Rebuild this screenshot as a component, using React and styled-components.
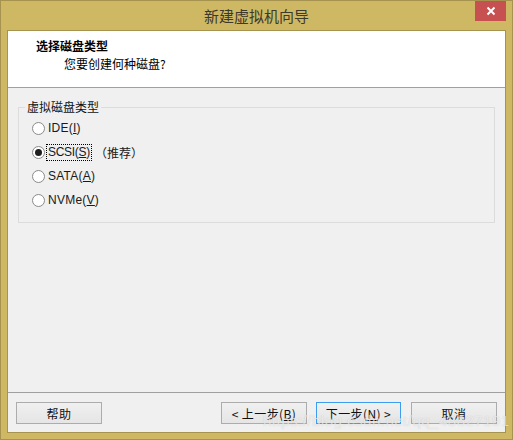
import styled, { createGlobalStyle } from 'styled-components';

const Global = createGlobalStyle`
  html, body { margin: 0; padding: 0; background: #cfb863; }
  body { font-family: "Liberation Sans", "Noto Sans CJK SC", sans-serif; }
`;

const Win = styled.div`
  position: relative;
  width: 513px;
  height: 440px;
  box-sizing: border-box;
  border: 1px solid #a5934f;
  background: #cfb863;
  display: flex;
  flex-direction: column;
  overflow: hidden;
`;

const TitleBar = styled.div`
  height: 29px;
  flex: none;
  display: flex;
  justify-content: center;
  align-items: center;
  padding-bottom: 1px;
  box-sizing: border-box;
  font-family: "Noto Sans CJK SC", sans-serif;
  font-size: 15px;
  color: #3d3a2c;
`;

const CloseBtn = styled.div`
  position: absolute;
  top: 0;
  right: 6px;
  width: 31px;
  height: 20px;
  background: #c75050;
  display: flex;
  align-items: center;
  justify-content: center;
`;

const Client = styled.div`
  flex: 1;
  margin: 0 6px 6px 6px;
  border: 1px solid #a5934f;
  background: #f0f0f0;
  display: flex;
  flex-direction: column;
  font-family: "Noto Sans CJK SC", sans-serif;
  font-size: 12px;
  color: #000;
`;

const Header = styled.div`
  height: 57px;
  flex: none;
  box-sizing: border-box;
  background: #fff;
  border-bottom: 1px solid #a0a0a0;
  padding: 6px 0 0 28px;
  line-height: 18px;
`;

const HeadTitle = styled.div`
  font-weight: 700;
`;

const HeadSub = styled.div`
  margin-left: 28px;
`;

const Body = styled.div`
  flex: 1;
  padding: 12px 10px 0 10px;
`;

const Group = styled.fieldset`
  margin: 0;
  padding: 2px 0 0 13px;
  height: 123px;
  box-sizing: border-box;
  border: 1px solid #dcdcdc;
  display: flex;
  flex-direction: column;
  min-inline-size: 0;
`;

const Legend = styled.legend`
  padding: 0 2px;
  margin-left: -7px;
  line-height: 14px;
  color: #111;
`;

const Option = styled.div`
  height: 24px;
  display: flex;
  align-items: center;
  gap: 1px;
`;

const Radio = styled.span`
  width: 11px;
  height: 11px;
  flex: none;
  border: 1px solid #8a8a8a;
  border-radius: 50%;
  background: #fff;
  display: flex;
  align-items: center;
  justify-content: center;
  &::after {
    content: "";
    display: ${(p) => (p.$on ? 'block' : 'none')};
    width: 7px;
    height: 7px;
    border-radius: 50%;
    background: #1e1e1e;
  }
`;

const Label = styled.span`
  padding: 0 1px;
  line-height: 15px;
  border: 1px ${(p) => (p.$focus ? 'dotted #000' : 'solid transparent')};
  color: #1a1a1a;
  font-family: "Liberation Sans", "Noto Sans CJK SC", sans-serif;
  letter-spacing: ${(p) => (p.$focus ? '-0.3px' : '0.25px')};
`;

const Note = styled.span`
  margin-left: 2px;
  color: #1a1a1a;
`;

const Footer = styled.div`
  height: 40px;
  flex: none;
  border-top: 1px solid #a0a0a0;
  box-sizing: border-box;
  padding: 9px 8px 0 8px;
  display: flex;
  gap: 9px;
`;

const Btn = styled.div`
  width: ${(p) => (p.$primary ? '85px' : '86px')};
  height: 22px;
  box-sizing: border-box;
  border: 1px solid ${(p) => (p.$primary ? '#3c9cf0' : '#acacac')};
  background: linear-gradient(#f0f0f0, #e5e5e5);
  display: flex;
  align-items: center;
  justify-content: center;
  white-space: pre;
  font-size: 12px;
  letter-spacing: 0.4px;
  color: #111;
  margin-left: ${(p) => (p.$push ? 'auto' : '0')};
  margin-right: ${(p) => (p.$primary ? '1px' : '0')};
`;

const Watermark = styled.div`
  position: absolute;
  left: 262px;
  top: 411px;
  font-family: "Liberation Sans", sans-serif;
  font-size: 15px;
  letter-spacing: 0.5px;
  white-space: nowrap;
  color: rgba(255, 255, 255, 0.62);
  text-shadow: 0 0 1px rgba(120, 120, 120, 0.35);
  pointer-events: none;
`;

export default function App() {
  return (
    <Win>
      <Global />
      <TitleBar>新建虚拟机向导</TitleBar>
      <CloseBtn>
        <svg width="10" height="10" viewBox="0 0 10 10">
          <path d="M1.5 1.5 L8.5 8.5 M8.5 1.5 L1.5 8.5" stroke="#fff" strokeWidth="2" />
        </svg>
      </CloseBtn>
      <Client>
        <Header>
          <HeadTitle>选择磁盘类型</HeadTitle>
          <HeadSub>您要创建何种磁盘?</HeadSub>
        </Header>
        <Body>
          <Group>
            <Legend>虚拟磁盘类型</Legend>
            <Option>
              <Radio />
              <Label>IDE(<u>I</u>)</Label>
            </Option>
            <Option>
              <Radio $on />
              <Label $focus>SCSI(<u>S</u>)</Label>
              <Note>（推荐）</Note>
            </Option>
            <Option>
              <Radio />
              <Label>SATA(<u>A</u>)</Label>
            </Option>
            <Option>
              <Radio />
              <Label>NVMe(<u>V</u>)</Label>
            </Option>
          </Group>
        </Body>
        <Footer>
          <Btn>帮助</Btn>
          <Btn $push>{'< 上一步('}<u>B</u>{')'}</Btn>
          <Btn $primary>下一步(<u>N</u>{') >'}</Btn>
          <Btn>取消</Btn>
        </Footer>
      </Client>
      <Watermark>https://blog.csdn.net/qq_43827191</Watermark>
    </Win>
  );
}
